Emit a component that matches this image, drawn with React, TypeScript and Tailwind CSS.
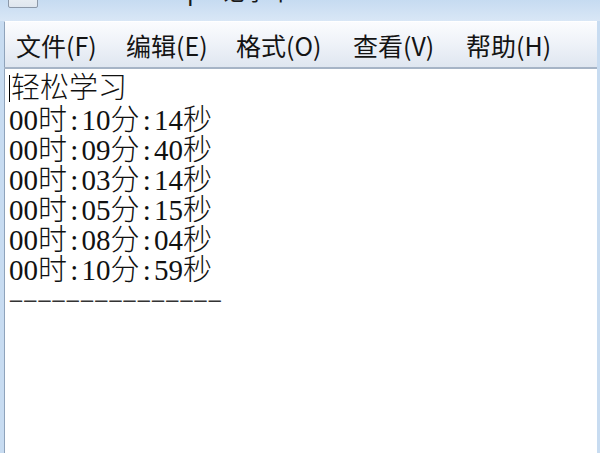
const lines = [
  ["00", "时", "10", "分", "14", "秒"],
  ["00", "时", "09", "分", "40", "秒"],
  ["00", "时", "03", "分", "14", "秒"],
  ["00", "时", "05", "分", "15", "秒"],
  ["00", "时", "08", "分", "04", "秒"],
  ["00", "时", "10", "分", "59", "秒"],
];

const menus = [
  { label: "文件(F)", w: "w-[110px]" },
  { label: "编辑(E)", w: "w-[110px]" },
  { label: "格式(O)", w: "w-[117px]" },
  { label: "查看(V)", w: "w-[113px]" },
  { label: "帮助(H)", w: "w-auto" },
];

const textFont = {
  fontFamily: '"Liberation Serif", "Noto Sans CJK SC", serif',
};

function Colon() {
  return <span className="inline-block w-[14.5px] text-center">:</span>;
}

function TimeLine({ parts }: { parts: string[] }) {
  return (
    <div className="h-[30px] leading-[30px] whitespace-nowrap">
      {parts[0]}
      {parts[1]}
      <Colon />
      {parts[2]}
      {parts[3]}
      <Colon />
      {parts[4]}
      {parts[5]}
    </div>
  );
}

export default function App() {
  return (
    <div className="w-[600px] h-[453px] overflow-hidden bg-[#c8dcf1] flex flex-col">
      {/* Title bar (cut off at the top) */}
      <div className="h-[21px] shrink-0 relative overflow-hidden bg-gradient-to-b from-[#c6dbf1] to-[#d9e7f6]">
        <div className="absolute left-[8px] top-[-14px] w-[30px] h-[22px] rounded-[2px] border border-[#8c98a8] bg-gradient-to-b from-[#f4f7fa] to-[#dfe6ee]" />
        <div
          className="absolute left-[150px] top-[-22px] text-[24px] leading-[24px] text-[#1a1a1a] whitespace-nowrap"
          style={{ fontFamily: '"Noto Sans CJK SC", sans-serif' }}
        >
          Stop - 记事本
        </div>
      </div>

      <div className="flex-1 flex flex-col pl-[4px] pr-[3px]">
        {/* Menu bar */}
        <div
          className="h-[46px] shrink-0 flex items-center pl-[11px] border-t border-[#ffffff] border-l border-l-[#8fa3bb] bg-gradient-to-b from-[#fbfcfe] via-[#eef2f8] to-[#dfe6f0] text-[25px] text-[#141414]"
          style={{ fontFamily: '"Noto Sans CJK SC", sans-serif' }}
        >
          {menus.map((m) => (
            <div key={m.label} className={`${m.w} shrink-0 leading-[46px]`}>
              {m.label}
            </div>
          ))}
        </div>
        <div className="h-[2px] shrink-0 bg-[#a6b4c6]" />

        {/* Text area */}
        <div
          className="flex-1 bg-white border-l border-[#8fa3bb] pl-[4px] pt-[4px] text-[29px] text-[#111] font-light"
          style={textFont}
        >
          <div className="h-[30px] leading-[30px] whitespace-nowrap flex items-center">
            <span className="inline-block w-px h-[27px] bg-black mr-px" />
            <span>轻松学习</span>
          </div>
          <div className="pt-[2px]">
            {lines.map((p, i) => (
              <TimeLine key={i} parts={p} />
            ))}
            <div className="h-[28px] leading-[28px] whitespace-nowrap text-[24px] font-bold tracking-[2.2px] text-[#333] pl-[1px]">
              {"–––––––––––––––"}
            </div>
          </div>
        </div>
      </div>
    </div>
  );
}
